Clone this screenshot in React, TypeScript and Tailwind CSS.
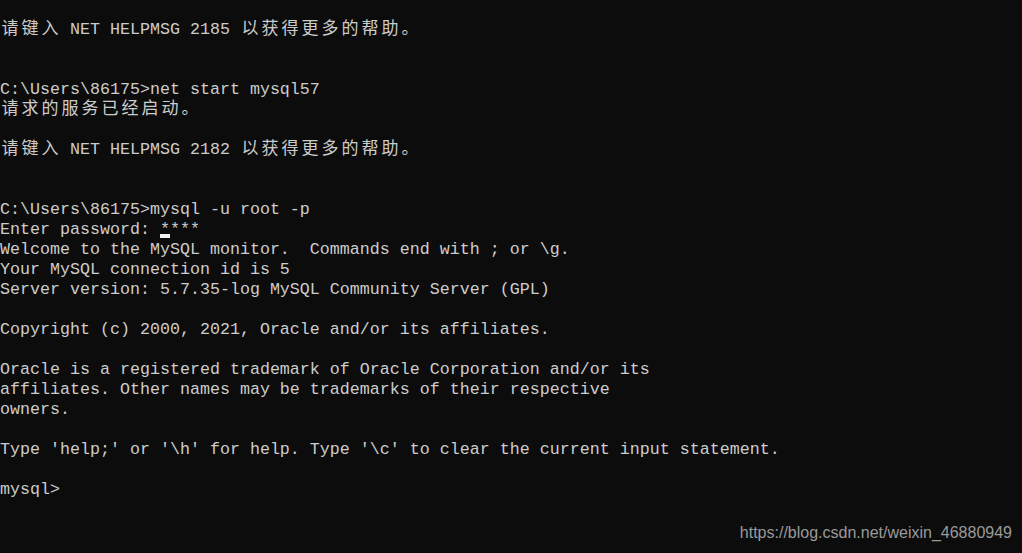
import React from "react";

const lines: string[] = [
  "请键入 NET HELPMSG 2185 以获得更多的帮助。",
  "",
  "",
  "C:\\Users\\86175>net start mysql57",
  "请求的服务已经启动。",
  "",
  "请键入 NET HELPMSG 2182 以获得更多的帮助。",
  "",
  "",
  "C:\\Users\\86175>mysql -u root -p",
  "Enter password: ****",
  "Welcome to the MySQL monitor.  Commands end with ; or \\g.",
  "Your MySQL connection id is 5",
  "Server version: 5.7.35-log MySQL Community Server (GPL)",
  "",
  "Copyright (c) 2000, 2021, Oracle and/or its affiliates.",
  "",
  "Oracle is a registered trademark of Oracle Corporation and/or its",
  "affiliates. Other names may be trademarks of their respective",
  "owners.",
  "",
  "Type 'help;' or '\\h' for help. Type '\\c' to clear the current input statement.",
  "",
  "mysql>",
];

function Line({ text, idx }: { text: string; idx: number }) {
  const parts: React.ReactNode[] = [];
  let buf = "";
  Array.from(text).forEach((ch, i) => {
    if (/[\u3000-\u9fff\uff00-\uffef]/.test(ch)) {
      if (buf) {
        parts.push(<span key={"a" + i}>{buf}</span>);
        buf = "";
      }
      parts.push(
        <span
          key={"c" + i}
          className="inline-block w-[20px] text-center text-[17px] leading-[20px]"
        >
          {ch}
        </span>
      );
    } else {
      buf += ch;
    }
  });
  if (buf) parts.push(<span key="end">{buf}</span>);
  return (
    <div className="relative h-[20px] whitespace-pre leading-[20px]">
      {parts}
      {idx === 10 && (
        <span className="absolute left-[160px] top-[14px] h-[4px] w-[10px] bg-[#f2f2f2]" />
      )}
    </div>
  );
}

export default function App() {
  return (
    <div className="relative flex h-[553px] w-[1022px] flex-col overflow-hidden bg-[#0c0c0c] pt-[20px] font-['Liberation_Mono','Noto_Sans_CJK_SC',monospace] text-[16.67px] text-[#cccccc]">
      {lines.map((l, i) => (
        <Line key={i} text={l} idx={i} />
      ))}
      <div className="absolute right-[10px] bottom-[10px] font-['Liberation_Sans',Arial,sans-serif] text-[16px] leading-[20px] text-[#9a9a9a]">
        https://blog.csdn.net/weixin_46880949
      </div>
    </div>
  );
}
